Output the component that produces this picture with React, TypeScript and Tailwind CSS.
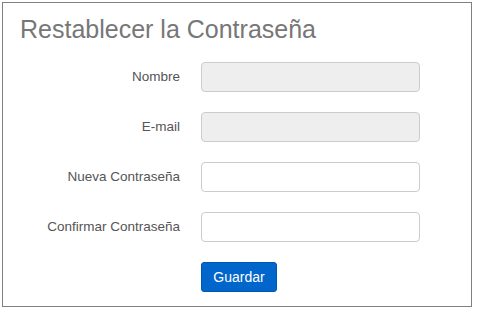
import React from "react";

const fields = [
	{ label: "Nombre", disabled: true },
	{ label: "E-mail", disabled: true },
	{ label: "Nueva Contraseña", disabled: false, type: "password" },
	{ label: "Confirmar Contraseña", disabled: false, type: "password" },
];

const App: React.FC = () => {
	return (
		<div className="p-[2px] bg-white" style={{ fontFamily: '"Liberation Sans", Arial, sans-serif' }}>
			<div className="w-[470px] h-[305px] border border-[#808080] bg-white pl-[17px] pt-[12px]">
				<h1 className="text-[25px] leading-[29px] text-[#777777] m-0 font-normal">
					Restablecer la Contraseña
				</h1>

				<form className="mt-[18px] -ml-[17px] flex flex-col gap-[20px]" onSubmit={(e) => e.preventDefault()}>
					{fields.map((f) => (
						<div key={f.label} className="flex items-center">
							<label className="w-[177px] text-right text-[13.5px] text-[#555555]">{f.label}</label>
							<input
								type={f.type || "text"}
								disabled={f.disabled}
								className={
									f.disabled
										? "ml-[21px] w-[219px] h-[30px] rounded-[4px] border border-[#cccccc] bg-[#eeeeee]"
										: "ml-[21px] w-[219px] h-[30px] rounded-[4px] border border-[#cccccc] bg-white"
								}
							/>
						</div>
					))}
					<div className="flex">
						<button
							type="submit"
							className="ml-[198px] w-[76px] h-[30px] rounded-[3px] border border-[#0058b3] bg-[#0066cc] text-white text-[14px]"
						>
							Guardar
						</button>
					</div>
				</form>
			</div>
		</div>
	);
};

export default App;
